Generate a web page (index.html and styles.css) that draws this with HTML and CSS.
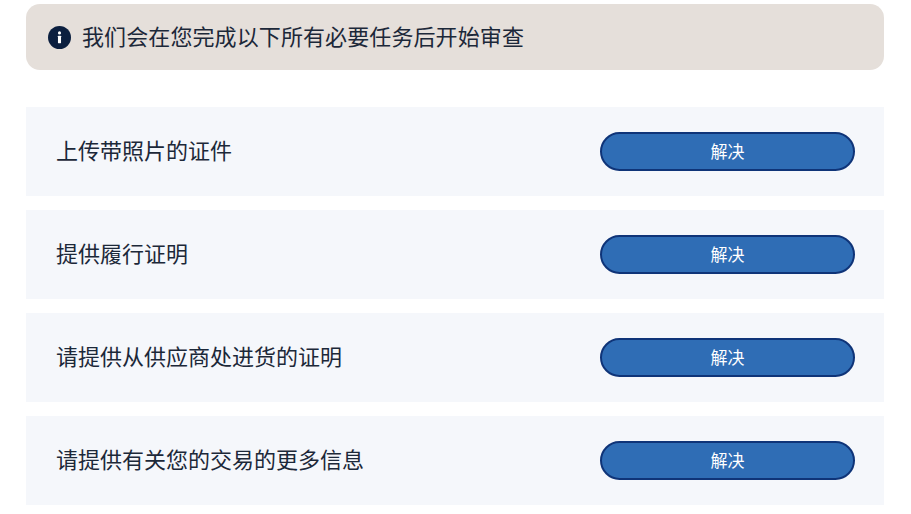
FILE: index.html
```html
<!DOCTYPE html>
<html lang="zh-CN">
    <head>
        <meta charset="utf-8">
        <title>审查任务</title>
        <link rel="stylesheet" href="styles.css">
    </head>
    <body>
        <div class="notice">
            <svg class="notice-icon" viewBox="0 0 24 24" width="23" height="23">
                <circle cx="12" cy="12" r="12" fill="#0b1f3f"/>
                <circle cx="12" cy="7.2" r="1.6" fill="#fff"/>
                <rect x="10.4" y="10.2" width="3.2" height="7.8" rx="0.5" fill="#fff"/>
            </svg>
            <span class="label notice-text">我们会在您完成以下所有必要任务后开始审查</span>
        </div>
        <main class="tasks">
            <div class="task">
                <span class="label">上传带照片的证件</span>
                <button class="resolve">解决</button>
            </div>
            <div class="task">
                <span class="label">提供履行证明</span>
                <button class="resolve">解决</button>
            </div>
            <div class="task">
                <span class="label">请提供从供应商处进货的证明</span>
                <button class="resolve">解决</button>
            </div>
            <div class="task">
                <span class="label">请提供有关您的交易的更多信息</span>
                <button class="resolve">解决</button>
            </div>
        </main>
    </body>
</html>
```

FILE: styles.css
```css
body {
    margin: 0;
    padding: 4px 27px 0 26px;
    background-color: #fff;
    color: #1c2839;
    font-family: "Liberation Sans", "Noto Sans CJK SC", sans-serif;
    font-size: 22px;
}
.label {
    padding-bottom: 5px;
}
.notice {
    display: flex;
    align-items: center;
    gap: 11px;
    height: 66px;
    padding-left: 22px;
    background-color: #e5dfda;
    border-radius: 14px;
}
.notice-icon {
    flex: none;
}
.notice-text {
    letter-spacing: 0.1px;
}
.tasks {
    display: flex;
    flex-direction: column;
    gap: 14px;
    margin-top: 37px;
}
.task {
    display: flex;
    align-items: center;
    justify-content: space-between;
    height: 89px;
    padding: 0 29px 0 30px;
    background-color: #f5f7fb;
}
.resolve {
    width: 255px;
    height: 39px;
    padding: 0 0 3px;
    background-color: #2f6db5;
    border: 2.5px solid #0f3478;
    border-radius: 20px;
    color: #fff;
    font-family: inherit;
    font-size: 17px;
}
```
